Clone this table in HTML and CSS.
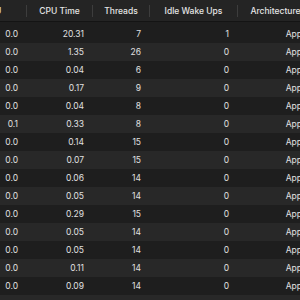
FILE: index.html
```html
<!DOCTYPE html>
<html>
<head>
<meta charset="utf-8">
<link rel="stylesheet" href="styles.css">
</head>
<body>
<div class="table">
  <div class="head">
    <div class="hcell">% CPU</div>
    <div class="hcell">CPU Time</div>
    <div class="hcell">Threads</div>
    <div class="hcell">Idle Wake Ups</div>
    <div class="hcell">Architecture</div>
  </div>
  <div class="body">
    <div class="row"><span>0.0</span><span>20.31</span><span>7</span><span>1</span><span>Apple</span></div>
    <div class="row"><span>0.0</span><span>1.35</span><span>26</span><span>0</span><span>Apple</span></div>
    <div class="row"><span>0.0</span><span>0.04</span><span>6</span><span>0</span><span>Apple</span></div>
    <div class="row"><span>0.0</span><span>0.17</span><span>9</span><span>0</span><span>Apple</span></div>
    <div class="row"><span>0.0</span><span>0.04</span><span>8</span><span>0</span><span>Apple</span></div>
    <div class="row"><span>0.1</span><span>0.33</span><span>8</span><span>0</span><span>Apple</span></div>
    <div class="row"><span>0.0</span><span>0.14</span><span>15</span><span>0</span><span>Apple</span></div>
    <div class="row"><span>0.0</span><span>0.07</span><span>15</span><span>0</span><span>Apple</span></div>
    <div class="row"><span>0.0</span><span>0.06</span><span>14</span><span>0</span><span>Apple</span></div>
    <div class="row"><span>0.0</span><span>0.05</span><span>14</span><span>0</span><span>Apple</span></div>
    <div class="row"><span>0.0</span><span>0.29</span><span>15</span><span>0</span><span>Apple</span></div>
    <div class="row"><span>0.0</span><span>0.05</span><span>14</span><span>0</span><span>Apple</span></div>
    <div class="row"><span>0.0</span><span>0.05</span><span>14</span><span>0</span><span>Apple</span></div>
    <div class="row"><span>0.0</span><span>0.11</span><span>14</span><span>0</span><span>Apple</span></div>
    <div class="row"><span>0.0</span><span>0.09</span><span>14</span><span>0</span><span>Apple</span></div>
    <div class="row"><span>0.0</span><span>0.02</span><span>5</span><span>0</span><span>Apple</span></div>
  </div>
</div>
</body>
</html>
```
FILE: styles.css
```css
html, body {
  margin: 0;
  padding: 0;
  background: #1e1e1e;
  overflow: hidden;
}
body {
  width: 300px;
  height: 300px;
  font-family: Inter, "Noto Sans", sans-serif;
  font-size: 8.5px;
  color: #e0e0e0;
}
.table {
  margin-left: -52px;
  width: 365px;
}
.head {
  display: grid;
  grid-template-columns: 78px 66px 57px 88px 76px;
  background: #242424;
  padding: 5px 0 4px;
  border-bottom: 1px solid #141414;
}
.hcell {
  height: 12px;
  line-height: 12px;
  text-align: center;
  font-weight: 500;
  color: #e4e4e4;
  white-space: nowrap;
  border-left: 1px solid #3d3d3d;
}
.hcell:first-child {
  border-left: none;
}
.body {
  padding-top: 3px;
}
.row {
  display: grid;
  grid-template-columns: 78px 66px 57px 88px 76px;
  height: 18px;
  line-height: 18px;
  background: #1e1e1e;
}
.row:nth-child(even) {
  background: #282828;
}
.row span {
  text-align: right;
  padding-right: 8px;
  white-space: nowrap;
}
.row span:last-child {
  padding-right: 4px;
}
```
